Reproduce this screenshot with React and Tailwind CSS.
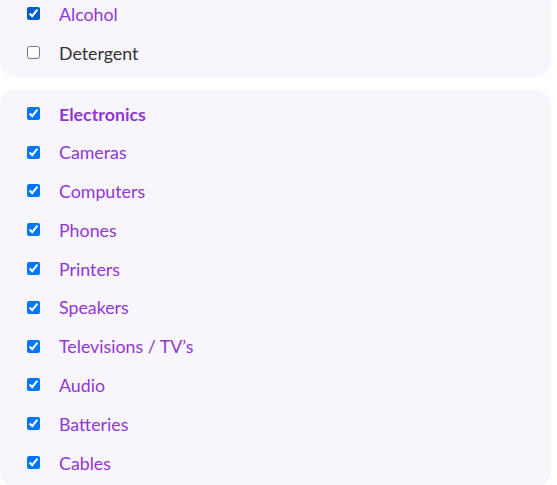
const electronics = [
  "Cameras",
  "Computers",
  "Phones",
  "Printers",
  "Speakers",
  "Televisions / TV’s",
  "Audio",
  "Batteries",
  "Cables",
];

function Row({ label, checked, bold, tall }) {
  return (
    <label className={`${tall ? "h-[39px]" : "h-[38.8px]"} flex items-center`}>
      <input
        type="checkbox"
        defaultChecked={checked}
        className="m-0 ml-[27px] w-[13px] h-[13px] shrink-0"
      />
      <span
        className={`ml-[19px] pt-[2px] text-[17.8px] leading-none ${
          checked ? "text-[#9036d2]" : "text-[#333333]"
        } ${bold ? "font-bold text-[#8a2bcf]" : ""}`}
      >
        {label}
      </span>
    </label>
  );
}

export default function App() {
  return (
    <div className="w-[557px] h-[485px] overflow-hidden bg-white font-['Lato','Liberation_Sans',sans-serif]">
      <div className="w-[551px] mt-[-11px] py-[5px] bg-[#f8f6fc] rounded-2xl flex flex-col">
        <Row label="Alcohol" checked tall />
        <Row label="Detergent" checked={false} tall />
      </div>
      <div className="w-[551px] mt-[13px] pt-[4px] pb-[5px] bg-[#f8f6fc] rounded-2xl flex flex-col">
        <Row label="Electronics" checked bold />
        {electronics.map((item, i) => (
          <Row key={i} label={item} checked />
        ))}
      </div>
    </div>
  );
}
